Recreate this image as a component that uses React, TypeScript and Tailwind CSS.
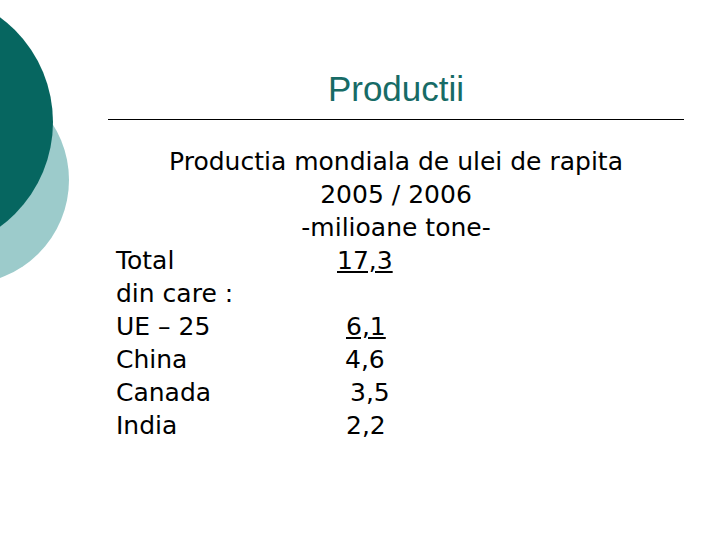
export default function App() {
  const rows: { label: string; value?: string; pad: string; under?: boolean }[] = [
    { label: "Total", value: "17,3", pad: "pl-[221px]", under: true },
    { label: "din care :", pad: "" },
    { label: "UE – 25", value: "6,1", pad: "pl-[230px]", under: true },
    { label: "China", value: "4,6", pad: "pl-[229px]" },
    { label: "Canada", value: "3,5", pad: "pl-[234px]" },
    { label: "India", value: "2,2", pad: "pl-[230px]" },
  ];

  return (
    <div className="relative h-[540px] w-[720px] overflow-hidden bg-white">
      {/* decorative circles top-left */}
      <svg className="absolute left-0 top-0" width="120" height="300" viewBox="0 0 120 300">
        <circle cx="-35" cy="180" r="104" fill="#9ccbcb" />
        <circle cx="-77" cy="122" r="130" fill="#066660" />
      </svg>

      <div className="relative ml-[108px] flex w-[576px] flex-col">
        <h1 className="mt-[69px] text-center font-['Liberation_Sans',Arial,sans-serif] text-[35px] leading-[40px] text-[#176b66]">
          Productii
        </h1>
        <div className="mt-[10px] border-t border-black" />

        <div className="mt-[25px] font-['DejaVu_Sans',Verdana,sans-serif] text-[25px] leading-[33px] text-black">
          <p className="text-center">Productia mondiala de ulei de rapita</p>
          <p className="text-center">2005 / 2006</p>
          <p className="text-center">-milioane tone-</p>
          {rows.map((r) => (
            <div key={r.label} className="flex pl-[8px]">
              <span className="w-0 whitespace-nowrap">{r.label}</span>
              {r.value && (
                <span className={`${r.pad} ${r.under ? "underline" : ""}`}>{r.value}</span>
              )}
            </div>
          ))}
        </div>
      </div>
    </div>
  );
}
